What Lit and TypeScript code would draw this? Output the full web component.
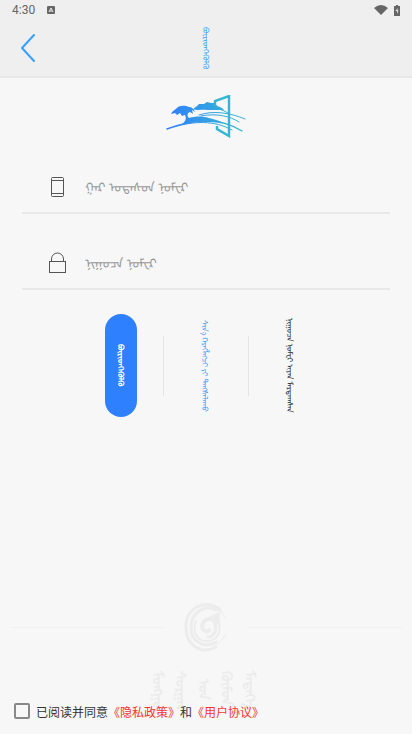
import { LitElement, html, css, svg } from "lit";
import { customElement } from "lit/decorators.js";

const wave = svg`
  <defs>
    <linearGradient id="sea" gradientUnits="userSpaceOnUse" x1="0" x2="66" y1="0" y2="0">
      <stop offset="0" stop-color="#2f7dff" />
      <stop offset="1" stop-color="#35b4d3" />
    </linearGradient>
  </defs>
  <g fill="url(#sea)">
    <path d="M5 19 C6 16 9 15 12 12 C16 10 20 11 23 12 C26 12 28 14 29 17 L26 15 L27 19 L24 17 C21 18 21 21 23 23 C30 21 36 21 43 23 C48 24 54 26 58 28 C44 27 31 26 15 30 C19 27 21 24 19 20 L16 21 L14 18 L11 20 L9 18 Z" />
    <path d="M27 14 L31 11 L33 9 L38 9 L41 7 L45 8 L49 8 L51 11 C54 12 57 13 58 15 C53 15 47 15 41 15 C36 14 32 16 27 14 Z" />
  </g>
  <g fill="none" stroke="url(#sea)" stroke-linecap="round">
    <path d="M1 34 C24 25 52 21 76 36" stroke-width="1.4" />
    <path d="M8 32 C28 26 48 25 66 35" stroke-width="1" />
    <path d="M33 20 C47 15 65 18 79 24" stroke-width="1" />
    <path d="M35 21 C50 18 64 21 73 27" stroke-width="1" />
    <path d="M48 13 C55 14 58 16 62 18" stroke-width="1" />
  </g>
  <path d="M49 11 V6 L63 1 V41 L51 34 V31" fill="none" stroke="#35b4d3" stroke-width="2.4" />
`;

@customElement("app-root")
export class AppRoot extends LitElement {
  static styles = css`
    :host {
      display: flex;
      flex-direction: column;
      position: relative;
      min-height: 100vh;
      overflow: hidden;
      box-sizing: border-box;
      background: #f7f7f7;
      color: #333;
      font-family: "Noto Sans Mongolian", "Mongolian Baiti", Roboto, "Noto Sans CJK SC", sans-serif;
    }
    * { box-sizing: border-box; }
    svg { display: block; flex: none; }
    button { border: 0; padding: 0; background: none; font: inherit; color: inherit; }
    header { background: #efefef; border-bottom: 2px solid #e8e8e8; }
    .status {
      display: flex;
      align-items: center;
      gap: 12px;
      height: 20px;
      padding: 0 12px;
      color: #666;
      font: 12px/20px Roboto, sans-serif;
    }
    .right { display: flex; align-items: center; gap: 6px; margin-left: auto; }
    .bar {
      display: grid;
      grid-template-columns: 1fr auto 1fr;
      align-items: center;
      height: 56px;
      padding: 0 20px;
    }
    .vertical { writing-mode: vertical-lr; white-space: nowrap; }
    h1 { margin: 0; padding-left: 4px; color: #36a0ff; font-size: 8px; line-height: 12px; font-weight: 400; }
    .logo { align-self: center; margin-top: 17px; }
    form { display: flex; flex-direction: column; padding: 24px 22px 0; }
    .field {
      display: flex;
      align-items: center;
      gap: 18px;
      height: 52px;
      margin-bottom: 24px;
      padding: 0 24px 0 25px;
      border-bottom: 2px solid #e9e9e9;
    }
    .field input {
      flex: 1;
      min-width: 0;
      height: 32px;
      border: 0;
      padding: 0 0 5px;
      outline: 0;
      background: none;
      font: inherit;
      font-size: 13px;
    }
    .field input::placeholder { color: #999; opacity: 1; }
    .actions {
      display: flex;
      justify-content: center;
      align-items: center;
      gap: 26px;
      font-size: 8px;
      line-height: 32px;
    }
    .submit { width: 32px; height: 103px; padding-left: 2px; border-radius: 16px; background: #2f80ff; color: #fff; font-weight: 700; }
    .rule { width: 1px; height: 60px; background: #e5e5e5; }
    .link { width: 32px; height: 103px; padding-left: 1px; }
    .blue { color: #36a0ff; }
    .black { color: #222; }
    .brand {
      display: flex;
      flex-direction: column;
      gap: 18px;
      margin-top: auto;
      padding: 0 10px;
      color: #ececec;
    }
    .crest { display: flex; align-items: center; gap: 20px; }
    .crest i { flex: 1; height: 1px; background: #f0f0f0; }
    .motto {
      display: flex;
      justify-content: center;
      height: 34px;
      font-size: 14px;
      line-height: 23px;
      font-weight: 700;
    }
    .particle { padding-top: 8px; }
    .consent {
      display: flex;
      align-items: center;
      height: 44px;
      margin-top: -15px;
      padding: 0 14px 2px;
      position: relative;
      font-size: 12px;
      line-height: 16px;
    }
    .consent input {
      appearance: none;
      width: 16px;
      height: 16px;
      margin: 0 6px 0 0;
      border: 2px solid #888;
      border-radius: 2px;
    }
    .consent a { color: #f43530; text-decoration: none; }
  `;

  render() {
    return html`
      <header>
        <div class="status">
          <span>4:30</span>
          <svg width="8" height="8" viewBox="0 0 8 8"><rect width="8" height="8" rx="1" fill="#666" /><path d="M2 6 4 2 6 6M3 5H5" fill="none" stroke="#efefef" /></svg>
          <div class="right">
            <svg width="14" height="10" viewBox="0 0 14 10"><path d="M0 3 Q7 -3 14 3 L7 10Z" fill="#666" /></svg>
            <svg width="6" height="11" viewBox="0 0 6 11"><path d="M2 0H4V1H6V11H0V1H2Z" fill="#666" /><path d="M3.500 3 1.500 6H3V9L4.500 5.500H3.500Z" fill="#efefef" /></svg>
          </div>
        </div>
        <div class="bar">
          <button aria-label="返回"><svg width="16" height="30" viewBox="0 0 16 30"><path d="M14 2 2 15 14 28" fill="none" stroke="#36a0ff" stroke-width="2" stroke-linecap="round" stroke-linejoin="round" /></svg></button>
          <h1 class="vertical">ᠪᠦᠷᠢᠳᠭᠡᠭᠦᠯᠬᠦ</h1>
        </div>
      </header>
      <svg class="logo" width="80" height="43" viewBox="0 0 80 43">${wave}</svg>
      <form>
        <label class="field">
          <svg width="20" height="22" viewBox="0 0 20 22" fill="none" stroke="#555"><rect x="4.500" y="1.500" width="12" height="19" rx="1" /><path d="M4 4.500H17M4 17.500H17" /></svg>
          <input type="tel" aria-label="ᠭᠠᠷ ᠤᠲᠠᠰᠤᠨ ᠨᠣᠮᠧᠷ" placeholder="ᠭᠠᠷ ᠤᠲᠠᠰᠤᠨ ᠨᠣᠮᠧᠷ" />
        </label>
        <label class="field">
          <svg width="20" height="22" viewBox="0 0 20 22" fill="none" stroke="#555"><rect x="2.500" y="9.500" width="16" height="11" /><path d="M4.500 9V7A6 6 0 0 1 16.500 7V9" /></svg>
          <input type="password" aria-label="ᠨᠢᠭᠤᠴᠠ ᠨᠣᠮᠧᠷ" placeholder="ᠨᠢᠭᠤᠴᠠ ᠨᠣᠮᠧᠷ" />
        </label>
        <div class="actions">
          <button type="button" class="submit vertical">ᠪᠦᠷᠢᠳᠭᠡᠭᠦᠯᠬᠦ</button>
          <span class="rule"></span>
          <button type="button" class="link vertical blue">ᠰᠢᠨ᠎ᠡ ᠬᠡᠷᠡᠭᠯᠡᠭᠴᠢ ᠶᠢ ᠳᠠᠩᠰᠠᠯᠠᠬᠤ</button>
          <span class="rule"></span>
          <button type="button" class="link vertical black">ᠨᠢᠭᠤᠴᠠ ᠨᠣᠮᠧᠷ ᠢᠶᠠᠨ ᠮᠠᠷᠲᠠᠭᠰᠠᠨ</button>
        </div>
      </form>
      <div class="brand">
        <div class="crest">
          <i></i>
          <svg width="44" height="52" viewBox="0 0 44 52" fill="none" stroke="#ececec" stroke-linecap="round">
            <path d="M36 9C26-2 3 4 2 24S16 54 32 46" stroke-width="3" />
            <path d="M32 9C22 3 7 11 7 26S20 48 32 41" stroke-width="3" />
            <path d="M12 20C8 29 12 41 24 40S37 28 34 17" stroke-width="2" />
            <path d="M25 29C22 33 16 28 19 22C22 16 31 17 32 21" stroke-width="4" />
            <path d="M30 20C34 29 30 36 24 36" stroke-width="3" />
            <path d="M34 23 36 11 24 17Z" fill="#ececec" stroke-width="1" />
            <path d="M36 8 41 17M42 33Q37 42 29 45" stroke-width="1" />
          </svg>
          <i></i>
        </div>
        <div class="motto">
          <span class="vertical">ᠮᠣᠩᠭᠣᠯ</span><span class="vertical">ᠰᠤᠷᠭᠠᠨ</span><span class="vertical particle">ᠤᠨ</span><span class="vertical">ᠬᠦᠮᠦᠨ</span><span class="vertical">ᠮᠡᠳᠡᠭᠡ</span>
        </div>
      </div>
      <div class="consent">
        <input id="agree" type="checkbox" />
        <label for="agree">已阅读并同意</label><a href="#privacy">《隐私政策》</a><label for="agree">和</label><a href="#terms">《用户协议》</a>
      </div>
    `;
  }
}
